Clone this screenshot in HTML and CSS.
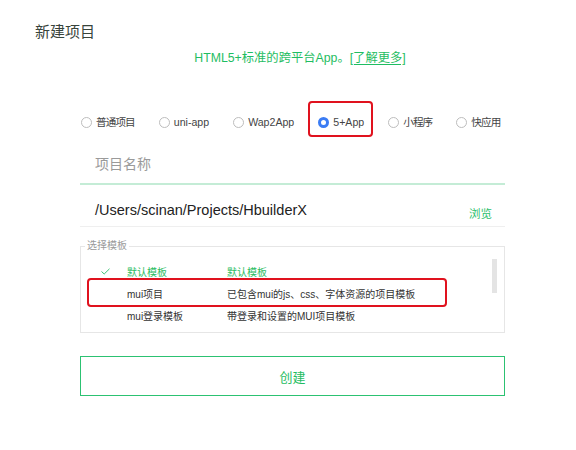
FILE: index.html
```html
<!DOCTYPE html>
<html lang="zh-CN">
<head>
<meta charset="utf-8">
<title>新建项目</title>
<link rel="stylesheet" href="styles.css">
</head>
<body>
<div class="page">
  <h1 class="title">新建项目</h1>
  <div class="content">
    <p class="subtitle">HTML5+标准的跨平台App。<span class="link">[了解更多]</span></p>

    <div class="radios">
      <label class="radio"><span class="dot"></span><span class="rlabel cjk">普通项目</span></label>
      <label class="radio"><span class="dot"></span><span class="rlabel">uni-app</span></label>
      <label class="radio"><span class="dot"></span><span class="rlabel">Wap2App</span></label>
      <label class="radio checked"><span class="dot"></span><span class="rlabel">5+App</span><span class="mark mark-radio"></span></label>
      <label class="radio"><span class="dot"></span><span class="rlabel cjk">小程序</span></label>
      <label class="radio"><span class="dot"></span><span class="rlabel cjk">快应用</span></label>
    </div>

    <div class="name-field">项目名称</div>

    <div class="path-field">
      <span class="path">/Users/scinan/Projects/HbuilderX</span>
      <span class="browse">浏览</span>
    </div>

    <fieldset class="templates">
      <legend class="legend">选择模板</legend>
      <div class="rows">
        <div class="row active">
          <span class="check"><svg width="9" height="7" viewBox="0 0 9 7"><polyline points="0.5,3.5 3.2,6 8.5,0.8" fill="none" stroke="#3cc276" stroke-width="1"/></svg></span>
          <span class="c1">默认模板</span>
          <span class="c2">默认模板</span>
        </div>
        <div class="row">
          <span class="check"></span>
          <span class="c1">mui项目</span>
          <span class="c2">已包含mui的js、css、字体资源的项目模板</span>
          <span class="mark mark-row"></span>
        </div>
        <div class="row">
          <span class="check"></span>
          <span class="c1">mui登录模板</span>
          <span class="c2">带登录和设置的MUI项目模板</span>
        </div>
        <span class="scrollbar"></span>
      </div>
    </fieldset>

    <button class="create" type="button">创建</button>
  </div>
</div>
</body>
</html>
```

FILE: styles.css
```css
* { box-sizing: border-box; }

html, body {
  margin: 0;
  padding: 0;
  background: #fff;
}

body {
  font-family: "Liberation Sans", "Noto Sans CJK SC", sans-serif;
  color: #333;
}

.page {
  width: 576px;
  height: 450px;
  padding-top: 22px;
}

.title {
  margin: 0 0 0 35px;
  font-size: 15px;
  line-height: 20px;
  font-weight: normal;
  color: #38443c;
}

.content {
  margin-left: 80px;
  width: 425px;
}

.subtitle {
  margin: 8px 0 0;
  padding-left: 15px;
  text-align: center;
  font-size: 12.3px;
  line-height: 16px;
  color: #1fbd62;
}

.link {
  text-decoration: underline;
  text-underline-offset: 2px;
}

.radios {
  display: flex;
  align-items: center;
  gap: 24px;
  margin-top: 48px;
  padding-left: 1px;
  height: 16px;
}

.radio {
  position: relative;
  display: flex;
  flex: none;
  align-items: center;
  gap: 4px;
  font-size: 10.6px;
  line-height: 16px;
  color: #444;
  white-space: nowrap;
}

.rlabel.cjk {
  letter-spacing: -0.9px;
}

.dot {
  width: 11px;
  height: 11px;
  border-radius: 50%;
  border: 1px solid #bdbdbd;
  background: #fff;
  flex: none;
}

.checked .dot {
  border: 3.5px solid #3b7cf4;
}

.mark {
  position: absolute;
  border: 2px solid #e0121e;
  border-radius: 4px;
  pointer-events: none;
}

.mark-radio {
  left: -10px;
  top: -13px;
  width: 65px;
  height: 36px;
}

.name-field {
  margin-top: 24px;
  padding: 0 0 9px 15px;
  font-size: 14px;
  line-height: 20px;
  color: #9a9a9a;
  border-bottom: 2px solid #c4ecd6;
}

.path-field {
  display: flex;
  justify-content: space-between;
  align-items: flex-end;
  margin-top: 15px;
  padding: 0 13px 6px 15px;
  border-bottom: 1px solid #efefef;
}

.path {
  font-size: 14.5px;
  line-height: 20px;
  color: #222;
}

.browse {
  font-size: 11.5px;
  line-height: 14px;
  color: #2cc06c;
  margin-bottom: -1px;
}

.templates {
  margin: 13px 0 0;
  padding: 0 0 6px;
  min-width: 0;
  border: 1px solid #e6e6e6;
}

.legend {
  margin-left: 4px;
  padding: 0 2px;
  font-size: 10px;
  line-height: 12px;
  color: #9a9a9a;
}

.rows {
  position: relative;
  margin-top: 8px;
}

.row {
  position: relative;
  display: grid;
  grid-template-columns: 26px 100px 1fr;
  align-items: center;
  height: 22px;
  padding-left: 20px;
  font-size: 10px;
  color: #333;
}

.row.active {
  color: #2bbd62;
}

.check {
  display: flex;
  align-items: center;
}

.mark-row {
  left: 6px;
  top: -4px;
  width: 360px;
  height: 29px;
}

.scrollbar {
  position: absolute;
  right: 7px;
  top: -1px;
  width: 5px;
  height: 34px;
  background: #e4e4e4;
}

.create {
  display: block;
  width: 100%;
  height: 40px;
  margin-top: 23px;
  padding: 0;
  border: 1px solid #2cc272;
  background: #fff;
  font-family: inherit;
  font-size: 13px;
  color: #1fbd62;
  cursor: pointer;
}
```
